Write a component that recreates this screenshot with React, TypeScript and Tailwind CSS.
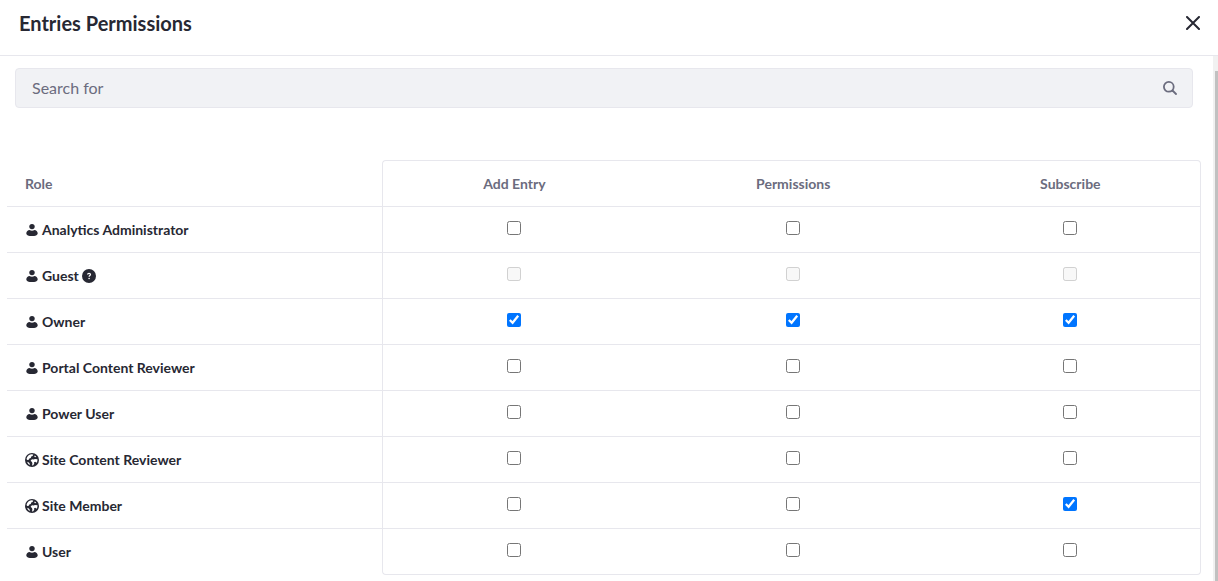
import { useState } from "react";

type RoleIcon = "user" | "globe";

interface Role {
  name: string;
  icon: RoleIcon;
  help?: boolean;
  disabled?: boolean;
  granted: string[];
}

const actions = ["Add Entry", "Permissions", "Subscribe"];

const roles: Role[] = [
  { name: "Analytics Administrator", icon: "user", granted: [] },
  { name: "Guest", icon: "user", help: true, disabled: true, granted: [] },
  { name: "Owner", icon: "user", granted: ["Add Entry", "Permissions", "Subscribe"] },
  { name: "Portal Content Reviewer", icon: "user", granted: [] },
  { name: "Power User", icon: "user", granted: [] },
  { name: "Site Content Reviewer", icon: "globe", granted: [] },
  { name: "Site Member", icon: "globe", granted: ["Subscribe"] },
  { name: "User", icon: "user", granted: [] },
];

function UserIcon() {
  return (
    <svg viewBox="0 0 14 14" className="size-3.5 shrink-0" fill="currentColor" aria-hidden="true">
      <circle cx="7" cy="3.600" r="2.700" />
      <path d="M1.300 10.300C1.300 8.300 3 7.300 4.500 7C6 8 8 8 9.500 7C11 7.300 12.700 8.300 12.700 10.300C12.700 12.300 10.300 13.100 7 13.100S1.300 12.300 1.300 10.300Z" />
    </svg>
  );
}

function GlobeIcon() {
  return (
    <svg viewBox="0 0 14 14" className="size-3.5 shrink-0" aria-hidden="true">
      <circle cx="7" cy="7" r="7" fill="currentColor" />
      <path fill="#fff" d="M1.500 6C2 3.500 3.800 1.700 6.300 1.300L8.300 1.600L7.600 3L6.200 3.600L5.800 5L4.300 5.500L3.800 6.700L2.200 6.900Z" />
      <path fill="#fff" d="M2.200 8.800L3.800 9.400L4.600 10.600L4.900 12.100C3.500 11.500 2.500 10.300 2.200 8.800Z" />
      <path fill="#fff" d="M7.300 6.200L8.600 6.600L10 5.900L12.400 6.200C12.600 7.500 12.300 8.700 11.700 9.700L10.200 8.700L9.100 9.200L9.200 10.800L8.200 12.300L6.900 12.500L7.400 10.700L7 9.100L5.700 8L6 6.900Z" />
      <path fill="#fff" d="M9.700 2.400L11.200 3.600L10.300 4.300L9.200 3.600Z" />
    </svg>
  );
}

function HelpIcon() {
  return (
    <svg viewBox="0 0 14 14" className="size-3.5 shrink-0" role="img" aria-label="Help">
      <circle cx="7" cy="7" r="7" fill="currentColor" />
      <path d="M5.500 5.500C5.600 4.600 6.200 4.300 7 4.300C7.900 4.300 8.500 4.800 8.500 5.500C8.500 6.500 7.100 6.600 7.100 7.800" fill="none" stroke="#fff" strokeWidth="1.200" />
      <circle cx="7.100" cy="9.500" r=".8" fill="#fff" />
    </svg>
  );
}

export default function App() {
  const [granted, setGranted] = useState(() => new Set(roles.flatMap((r) => r.granted.map((a) => `${r.name}/${a}`))));

  const toggle = (key: string) =>
    setGranted((prev) => {
      const next = new Set(prev);
      if (!next.delete(key)) next.add(key);
      return next;
    });

  return (
    <div className="flex min-h-screen flex-col bg-white font-['Lato',sans-serif] text-[#272833]">
      <header className="flex h-14 items-center justify-between border-b border-[#e7e7ed] pr-4 pb-[9px] pl-[19px]">
        <h1 className="text-xl font-bold">Entries Permissions</h1>
        <button type="button" aria-label="Close" className="flex size-[18px] items-center justify-center">
          <svg viewBox="0 0 14 14" className="size-3.5" fill="none" stroke="currentColor" strokeWidth="2" strokeLinecap="round" aria-hidden="true">
            <path d="M1 1L13 13M13 1L1 13" />
          </svg>
        </button>
      </header>

      <div className="flex grow">
        <main className="grow pt-3 pr-3 pb-1.5 pl-[7px]">
          <form role="search" className="mr-2 ml-2 flex h-10 items-center rounded border border-[#e7e7ed] bg-[#f1f2f5] pr-[15px] pl-4" onSubmit={(e) => e.preventDefault()}>
            <input type="search" aria-label="Search for" placeholder="Search for" className="grow bg-transparent text-base outline-none placeholder:text-[#6b6c7e]" />
            <button type="submit" aria-label="Search" className="text-[#6b6c7e]">
              <svg viewBox="0 0 14 14" className="size-3.5" fill="none" stroke="currentColor" strokeWidth="1.800" strokeLinecap="round" aria-hidden="true">
                <circle cx="5.800" cy="5.800" r="4.900" />
                <path d="M9.500 9.500L13 13" />
              </svg>
            </button>
          </form>

          <table className="mt-[52px] w-full table-fixed border-separate border-spacing-0 text-sm font-bold">
            <colgroup>
              <col className="w-[31.4%]" />
              <col className="w-[22.1%]" />
              <col className="w-[24.7%]" />
              <col className="w-[21.8%]" />
            </colgroup>
            <thead>
              <tr className="h-[47px] text-[#6b6c7e]">
                <th scope="col" className="border-t border-b border-[#e7e7ed] border-t-transparent pl-[18px] text-left">Role</th>
                {actions.map((action) => (
                  <th key={action} scope="col" className="border-t border-b border-[#e7e7ed] nth-2:rounded-tl nth-2:border-l last:rounded-tr last:border-r">
                    {action}
                  </th>
                ))}
              </tr>
            </thead>
            <tbody>
              {roles.map((role) => (
                <tr key={role.name} className="group h-[46px]">
                  <th scope="row" className="border-b border-[#e7e7ed] pl-[18px] text-left group-last:border-b-transparent">
                    <span className="flex items-center gap-[3px]">
                      {role.icon === "user" ? <UserIcon /> : <GlobeIcon />}
                      {role.name}
                      {role.help && <HelpIcon />}
                    </span>
                  </th>
                  {actions.map((action) => {
                    const key = `${role.name}/${action}`;
                    return (
                      <td
                        key={action}
                        className="border-b border-[#e7e7ed] pb-[3px] nth-2:border-l last:border-r group-last:nth-2:rounded-bl group-last:last:rounded-br"
                      >
                        <input
                          type="checkbox"
                          aria-label={`${action} for ${role.name}`}
                          checked={granted.has(key)}
                          disabled={role.disabled}
                          onChange={() => toggle(key)}
                          className="mx-auto block size-3.5"
                        />
                      </td>
                    );
                  })}
                </tr>
              ))}
            </tbody>
          </table>
        </main>

        <div className="flex w-[5px] shrink-0 flex-col bg-[#f1f1f1] pt-[15px] pl-0.5" aria-hidden="true">
          <div className="grow bg-[#c1c1c1]" />
        </div>
      </div>
    </div>
  );
}
